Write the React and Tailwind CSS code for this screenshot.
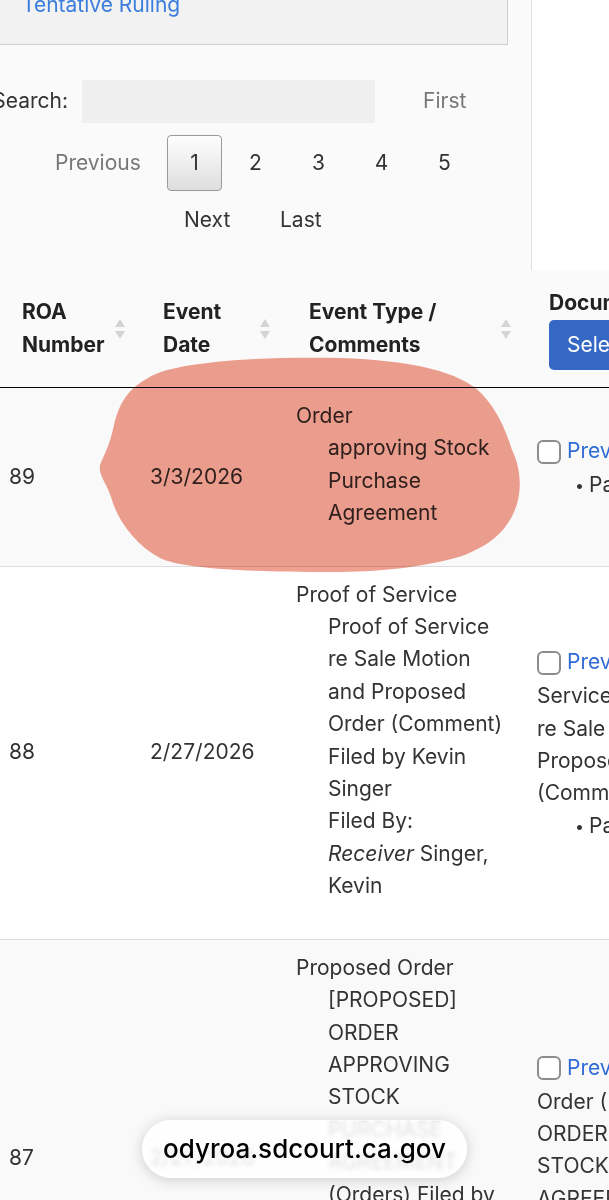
import React from 'react';

const rows = [
  {
    roa: '89',
    date: '3/3/2026',
    title: 'Order',
    lines: ['approving Stock', 'Purchase', 'Agreement'],
    doc: ['Preview Order'],
    bullet: 'Pages: 3',
    bg: 'bg-[#f9f9f9]',
  },
  {
    roa: '88',
    date: '2/27/2026',
    title: 'Proof of Service',
    lines: [
      'Proof of Service',
      're Sale Motion',
      'and Proposed',
      'Order (Comment)',
      'Filed by Kevin',
      'Singer',
      'Filed By:',
      <><i>Receiver</i> Singer,</>,
      'Kevin',
    ],
    doc: ['Preview Proof of', 'Service', 're Sale Motion and', 'Proposed Order', '(Comment)'],
    bullet: 'Pages: 4',
    bg: 'bg-white',
  },
  {
    roa: '87',
    date: '2/27/2026',
    title: 'Proposed Order',
    lines: [
      '[PROPOSED]',
      'ORDER',
      'APPROVING',
      'STOCK',
      'PURCHASE',
      'AGREEMENT',
      '(Orders) Filed by',
      'Kevin Singer',
      'Filed By:',
      <><i>Receiver</i> Singer,</>,
      'Kevin',
    ],
    doc: ['Preview Proposed', 'Order ([PROPOSED]', 'ORDER APPROVING', 'STOCK PURCHASE', 'AGREEMENT)'],
    bullet: 'Pages: 5',
    bg: 'bg-[#f9f9f9]',
  },
];

const cols = 'grid grid-cols-[140px_146px_241px_260px]';

function SortArrows() {
  return (
    <svg width="12" height="30" viewBox="0 0 12 30" className="shrink-0">
      <path d="M1 13 L6 5 L11 13 Z" fill="#d4d4d4" />
      <path d="M1 17 L6 25 L11 17 Z" fill="#d4d4d4" />
    </svg>
  );
}

function Checkbox() {
  return <span className="inline-block w-[24px] h-[24px] rounded-[6px] border-2 border-[#8c8c8c] bg-white shrink-0" />;
}

function Pager() {
  return (
    <div className="w-[532px] shrink-0 border-r border-[#dedede]">
      <div className="flow-root w-[508px] h-[45px] bg-[#f2f2f2] border-r border-b border-[#cfcfcf] pl-[22px]">
        <a className="block -mt-[11px] text-[#3b7ddd]">Tentative Ruling</a>
      </div>

      <div className="mt-[35px] h-[43px] flex items-center">
        <div className="w-[68px] shrink-0 flex justify-end whitespace-nowrap">Search:</div>
        <div className="ml-[14px] w-[293px] h-[43px] bg-[#efefef]" />
        <span className="ml-[48px] text-[#777]">First</span>
      </div>

      <div className="mt-[12px] h-[56px] flex items-center pl-[55px]">
        <span className="w-[112px] text-[#777]">Previous</span>
        <span className="w-[55px] h-[56px] flex items-center justify-center rounded-[4px] border border-[#9a9a9a] bg-linear-to-b from-[#fefefe] to-[#dedede]">1</span>
        <div className="ml-[2px] flex">
          {['2', '3', '4', '5'].map((n) => (
            <span key={n} className="w-[63px] text-center">{n}</span>
          ))}
        </div>
      </div>

      <div className="mt-[13px] h-[32px] mb-[34px] flex items-center pl-[184px]">
        <span className="w-[96px]">Next</span>
        <span>Last</span>
      </div>
    </div>
  );
}

export default function App() {
  return (
    <div
      className="relative w-[609px] h-[1200px] overflow-hidden bg-[#fafafa] text-[#333] text-[21px] leading-[32.4px]"
      style={{ fontFamily: 'Inter, "Noto Sans", sans-serif' }}
    >
      <div className="flex">
        <Pager />
        <div className="flex-1 bg-white" />
      </div>

      {/* table header */}
      <div className={`${cols} h-[118px] items-center border-b border-black font-bold text-[#222] bg-[#fafafa]`}>
        <div className="flex items-center justify-between pl-[22px] pr-[14px]">
          <span>ROA<br />Number</span>
          <SortArrows />
        </div>
        <div className="flex items-center justify-between pl-[23px] pr-[15px]">
          <span>Event<br />Date</span>
          <SortArrows />
        </div>
        <div className="flex items-center justify-between pl-[23px] pr-[15px]">
          <span>Event Type /<br />Comments</span>
          <SortArrows />
        </div>
        <div className="pl-[22px] whitespace-nowrap">
          <div>Documents</div>
          <button className="mt-[1px] h-[50px] px-[18px] rounded-[5px] bg-[#3568c4] text-white font-normal">Select All</button>
        </div>
      </div>

      {rows.map((r) => (
        <div key={r.roa} className={`${cols} items-center border-b border-[#dddddd] ${r.bg}`}>
          <div className="pl-[9px]">{r.roa}</div>
          <div className="pl-[10px]">{r.date}</div>
          <div className="pl-[10px] pt-3 pb-9 whitespace-nowrap">
            <div>{r.title}</div>
            {r.lines.map((l, i) => (
              <div key={i} className="pl-[32px]">{l}</div>
            ))}
          </div>
          <div className="pl-[10px] whitespace-nowrap">
            <div className="h-[35px] flex items-center gap-[6px]">
              <Checkbox />
              <a className="text-[#2f6cd6]">{r.doc[0].split(' ')[0]}</a>
              <span>{r.doc[0].split(' ').slice(1).join(' ')}</span>
            </div>
            {r.doc.slice(1).map((l, i) => (
              <div key={i}>{l}</div>
            ))}
            <div className="pl-[38px] mb-[18px] flex">
              <span className="w-[14px] text-[16px]">•</span>
              <span>{r.bullet}</span>
            </div>
          </div>
        </div>
      ))}

      {/* highlighter scribble */}
      <svg className="absolute inset-0 pointer-events-none mix-blend-multiply" width="609" height="1200" viewBox="0 0 609 1200">
        <path
          d="M148 378 C170 362 260 356 340 358 C410 360 462 372 482 394 C500 414 506 432 512 450 C522 470 522 495 514 512 C506 530 492 545 462 556 C420 568 380 572 330 572 C240 572 180 568 160 558 C135 545 118 520 112 500 C108 485 98 475 100 465 C104 455 110 445 114 425 C120 400 130 388 148 378 Z"
          fill="#f0a090"
        />
      </svg>

      {/* url pill */}
      <div className="absolute left-[142px] top-[1120px] w-[325px] h-[58px] rounded-full bg-white/85 backdrop-blur-[2px] shadow-[0_2px_14px_rgba(0,0,0,0.18)] flex items-center justify-center text-[26px] font-medium text-black">
        odyroa.sdcourt.ca.gov
      </div>
    </div>
  );
}
